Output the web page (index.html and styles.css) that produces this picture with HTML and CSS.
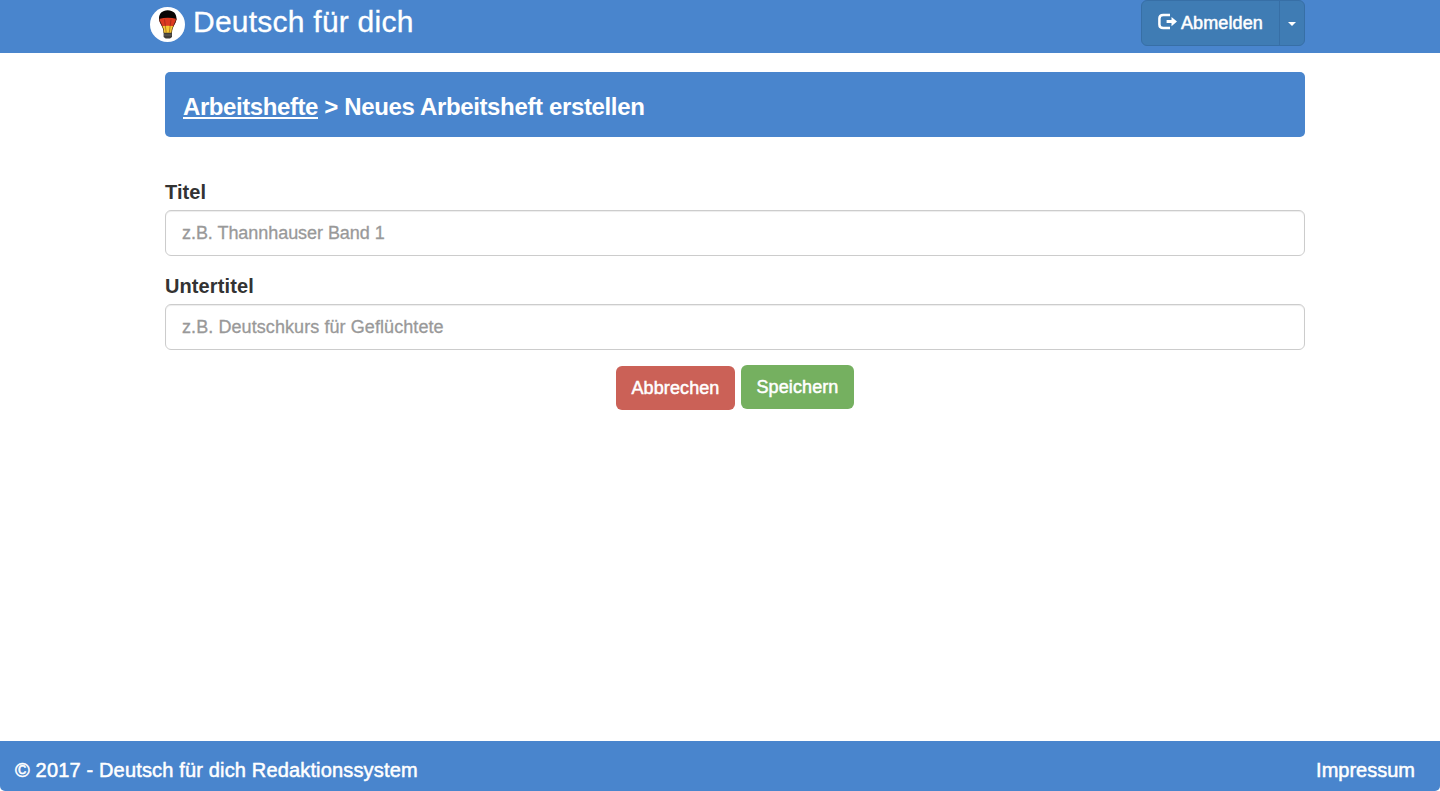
FILE: index.html
```html
<!DOCTYPE html>
<html lang="de">
<head>
<meta charset="utf-8">
<title>Deutsch für dich</title>
<link rel="stylesheet" href="styles.css">
</head>
<body>
<header class="navbar">
  <a class="brand">
    <svg class="logo" viewBox="0 0 35 35" width="35" height="35">
      <defs>
        <clipPath id="bulb"><path d="M17.700 3.200C12 3.200 9 6.800 9 11.400c0 5.200 4.600 7.300 4.600 14.600h8.400c0-7.300 4.500-9.400 4.500-14.600C26.500 6.800 23.400 3.200 17.700 3.200Z"/></clipPath>
      </defs>
      <circle cx="17.500" cy="17.500" r="17.500" fill="#fff"/>
      <g clip-path="url(#bulb)">
        <rect x="8" y="2" width="20" height="11" fill="#080505"/>
        <path d="M8 12.300 Q17.700 9.300 28 12.300V19.500H8Z" fill="#dd3a20"/>
        <path d="M8 19.500 Q17.700 17.800 28 19.500V26.500H8Z" fill="#f5c832"/>
        <path d="M9 11.400c0 5.200 4.600 7.300 4.600 14.600M26.500 11.400c0 5.200-4.500 7.300-4.500 14.600" fill="none" stroke="#40251b" stroke-width="1.300"/>
        <path d="M14.500 12.500l1.700 13M21 12.500l-1.700 13" fill="none" stroke="#692014" stroke-opacity=".55" stroke-width=".8"/>
      </g>
      <path d="M13.600 25.700h8.400v4.300l-2 1.500h-4.400l-2-1.500Z" fill="#403d39"/>
      <path d="M14 28h7.600" stroke="#77716a" stroke-width=".7"/>
    </svg>
    <span class="brand-name">Deutsch für dich</span>
  </a>
  <div class="btn-group">
    <button class="btn-primary logout">
      <svg class="logout-icon" viewBox="0 0 19 17" width="19" height="17">
        <path d="M12 2H5.200Q1.400 2 1.400 5.500V11.500Q1.400 15 5.200 15H12" fill="none" stroke="#fff" stroke-width="2.500"/>
        <path d="M8.600 7.100H13.500V3.900L19 8.600L13.500 13.300V10.100H8.600Z" fill="#fff"/>
      </svg>
      <span class="logout-text">Abmelden</span>
    </button>
    <button class="btn-primary toggle" aria-label="Menü"><span class="caret"></span></button>
  </div>
</header>
<main class="container">
  <h1 class="breadcrumb"><a class="crumb-link">Arbeitshefte</a><span class="crumb-rest">&nbsp;&gt; Neues Arbeitsheft erstellen</span></h1>
  <form class="form">
    <div class="form-group">
      <label class="label" for="titel">Titel</label>
      <input class="control control-title" id="titel" type="text" placeholder="z.B. Thannhauser Band 1">
    </div>
    <div class="form-group">
      <label class="label" for="untertitel">Untertitel</label>
      <input class="control control-subtitle" id="untertitel" type="text" placeholder="z.B. Deutschkurs für Geflüchtete">
    </div>
    <div class="actions">
      <button class="btn btn-danger" type="button">Abbrechen</button>
      <button class="btn btn-success" type="button">Speichern</button>
    </div>
  </form>
</main>
<footer class="footer">
  <span class="copyright">© 2017 - Deutsch für dich Redaktionssystem</span>
  <a class="imprint">Impressum</a>
</footer>
</body>
</html>
```
FILE: styles.css
```css
* { box-sizing: border-box; }
body {
  margin: 0;
  height: 791px;
  display: flex;
  flex-direction: column;
  background: #fff;
  color: #333;
  font-family: "Liberation Sans", Arial, sans-serif;
  overflow: hidden;
}
button, input { font-family: inherit; margin: 0; }
.navbar {
  height: 53px;
  background: #4985cd;
  display: flex;
  justify-content: space-between;
  align-items: flex-start;
  padding: 0 135px 0 150px;
  flex: none;
}
.brand { display: flex; color: #fff; }
.logo { margin-top: 7px; display: block; }
.brand-name {
  font-size: 30px;
  line-height: 43px;
  margin-left: 8px;
  letter-spacing: .24px;
  white-space: nowrap;
  -webkit-text-stroke: .3px #fff;
}
.btn-group { display: flex; }
.btn-primary {
  height: 46px;
  background: #3f7cb4;
  border: 1px solid #376fa6;
  color: #fff;
  font-size: 18px;
  display: flex;
  align-items: center;
  padding: 0;
  -webkit-text-stroke: .5px #fff;
}
.logout {
  width: 139px;
  border-radius: 6px 0 0 6px;
  padding-left: 16px;
  gap: 4px;
}
.logout-icon { margin-top: -3px; }
.logout-text { letter-spacing: .1px; }
.toggle {
  width: 26px;
  margin-left: -1px;
  border-radius: 0 6px 6px 0;
  justify-content: center;
}
.caret {
  border-top: 4px solid #fff;
  border-left: 4px solid transparent;
  border-right: 4px solid transparent;
  margin-top: 1px;
}
.container { width: 1140px; margin: 19px 0 0 165px; flex: 1; }
.breadcrumb {
  height: 65px;
  margin: 0;
  padding: 2px 18px 0;
  background: #4985cd;
  border-radius: 5px;
  color: #fff;
  font-size: 24px;
  line-height: 66px;
  font-weight: bold;
  display: flex;
  white-space: nowrap;
}
.crumb-link {
  letter-spacing: -.42px;
  text-decoration: underline;
  text-decoration-thickness: 2px;
  text-underline-offset: 2px;
}
.crumb-rest { letter-spacing: -.36px; }
.form { padding-top: 41px; }
.form-group { margin-bottom: 16px; }
.label {
  display: block;
  width: max-content;
  font-size: 20px;
  line-height: 29px;
  font-weight: bold;
  letter-spacing: .1px;
  margin-bottom: 3px;
}
.control {
  display: block;
  width: 100%;
  height: 46px;
  padding: 10px 16px;
  border: 1px solid #ccc;
  border-radius: 6px;
  background: #fff;
  font-size: 18px;
  box-shadow: inset 0 1px 1px rgba(0, 0, 0, .075);
}
.control::placeholder { color: #999; opacity: 1; -webkit-text-stroke: .3px #999; }
.control-title { letter-spacing: -.05px; }
.control-subtitle { letter-spacing: .08px; }
.actions { display: flex; justify-content: center; gap: 6px; margin-top: -1px; }
.btn {
  height: 44px;
  border: 0;
  border-radius: 6px;
  padding: 0;
  color: #fff;
  font-size: 18px;
  letter-spacing: .1px;
  -webkit-text-stroke: .5px #fff;
}
.btn-danger { width: 119px; margin-top: 1px; background: #cb6157; }
.btn-success { width: 113px; background: #75b060; }
.footer {
  height: 50px;
  flex: none;
  background: #4985cd;
  border-radius: 0 0 5px 5px;
  display: flex;
  justify-content: space-between;
  padding: 4px 25px 0 15px;
  color: #fff;
  font-size: 20px;
  line-height: 50px;
  -webkit-text-stroke: .5px #fff;
}
.copyright { letter-spacing: .16px; }
```
